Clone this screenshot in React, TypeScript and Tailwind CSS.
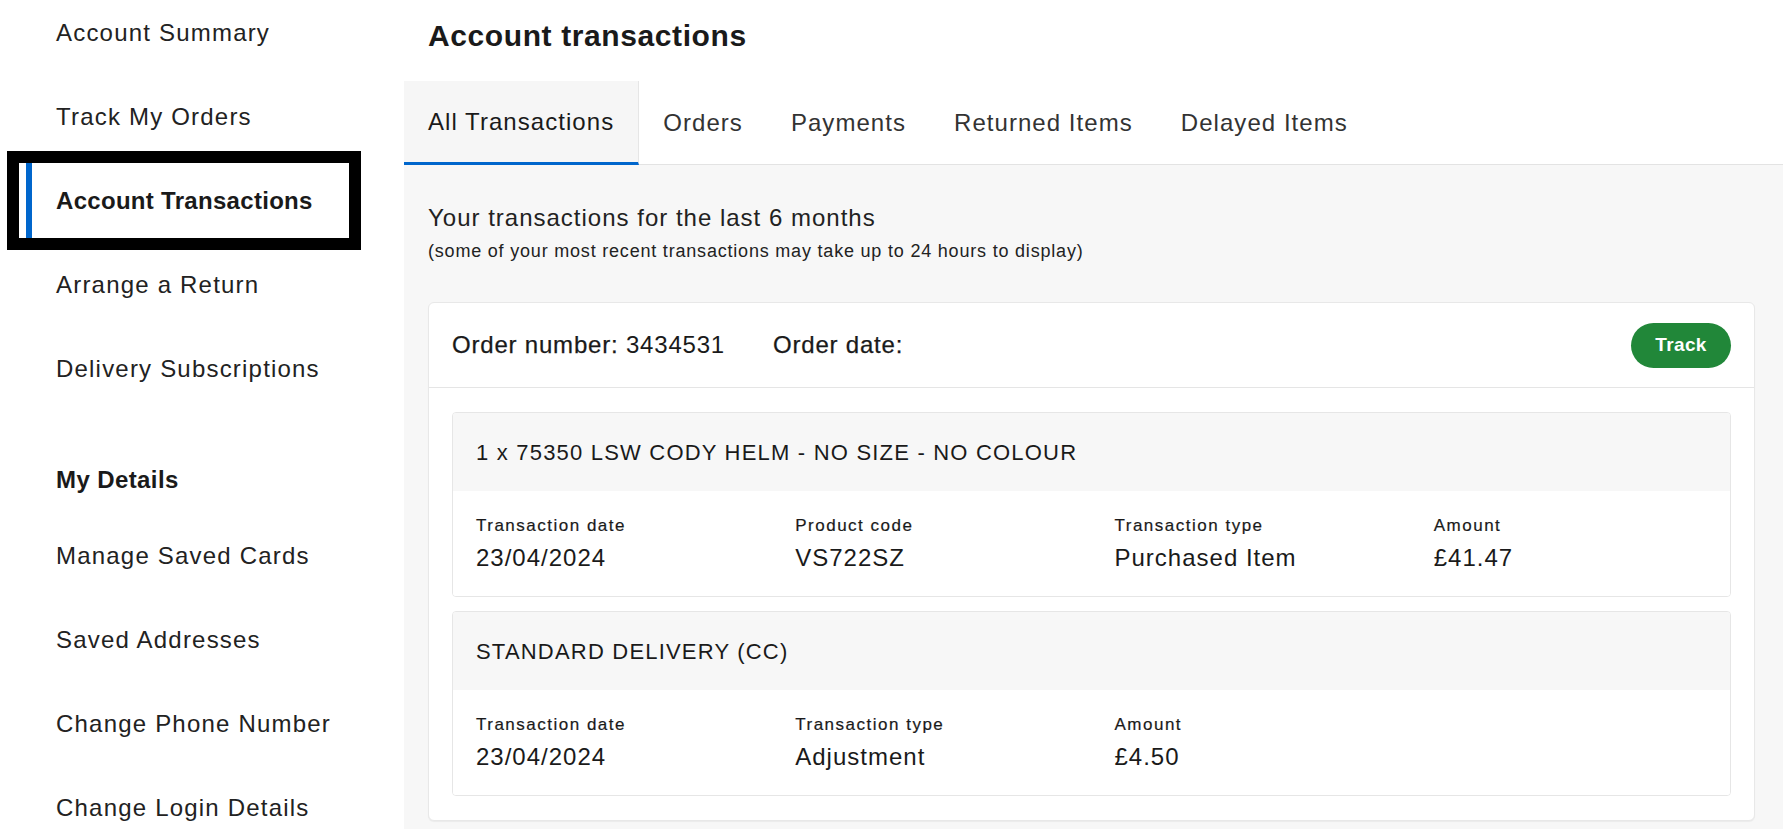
import React from "react";

const accountLinks = [
  "Account Summary",
  "Track My Orders",
  "Account Transactions",
  "Arrange a Return",
  "Delivery Subscriptions",
];

const detailLinks = [
  "Manage Saved Cards",
  "Saved Addresses",
  "Change Phone Number",
  "Change Login Details",
];

const tabs = ["All Transactions", "Orders", "Payments", "Returned Items", "Delayed Items"];

const lines = [
  {
    title: "1 x 75350 LSW CODY HELM - NO SIZE - NO COLOUR",
    fields: [
      { label: "Transaction date", value: "23/04/2024" },
      { label: "Product code", value: "VS722SZ" },
      { label: "Transaction type", value: "Purchased Item" },
      { label: "Amount", value: "£41.47" },
    ],
  },
  {
    title: "STANDARD DELIVERY (CC)",
    fields: [
      { label: "Transaction date", value: "23/04/2024" },
      { label: "Transaction type", value: "Adjustment" },
      { label: "Amount", value: "£4.50" },
    ],
  },
];

const NavItem = ({ label, active }: { label: string; active?: boolean }) => (
  <a
    href="#"
    className={
      "flex h-[75px] items-stretch " +
      (active ? "outline-[12px] outline-solid outline-black" : "")
    }
  >
    <span
      className={
        "ml-[7px] flex items-center border-l-[6px] pl-[24px] text-[24px] leading-[30px] " +
        (active
          ? "border-[#0066cc] font-bold tracking-[0.3px] text-[#1a1a1a]"
          : "border-transparent tracking-[1.2px] text-[#222]")
      }
    >
      {label}
    </span>
  </a>
);

const Sidebar = () => (
  <aside className="w-[404px] shrink-0 bg-white">
    <nav className="-mt-[5px] ml-[19px] w-[330px]">
      <div className="flex flex-col gap-[9px]">
        {accountLinks.map((l) => (
          <NavItem key={l} label={l} active={l === "Account Transactions"} />
        ))}
      </div>
      <div className="mt-[44px] flex h-[59px] items-center pl-[37px] text-[24px] font-bold tracking-[0.4px] text-[#1a1a1a]">
        My Details
      </div>
      <div className="mt-[9px] flex flex-col gap-[9px]">
        {detailLinks.map((l) => (
          <NavItem key={l} label={l} />
        ))}
      </div>
    </nav>
  </aside>
);

const App = () => {
  return (
    <div className="flex min-h-screen font-['Liberation_Sans',Arial,sans-serif] text-[#1a1a1a]">
      <Sidebar />
      <main className="flex-1 bg-[#f7f7f7]">
        <div className="bg-white">
          <div className="h-[81px] pl-6 pt-[19px]">
            <h1 className="text-[30px] font-bold leading-[34px] tracking-[0.6px]">
              Account transactions
            </h1>
          </div>
          <div className="flex h-[84px] border-b border-[#e3e3e3]">
            {tabs.map((t, i) => (
              <button
                key={t}
                className={
                  "-mb-px flex items-center px-6 text-[24px] tracking-[1.05px] " +
                  (i === 0
                    ? "border-r border-b-[3px] border-r-[#e6e6e6] border-b-[#0066cc] bg-[#f6f6f6] pt-[1px] text-[#1a1a1a]"
                    : "text-[#333]")
                }
              >
                {t}
              </button>
            ))}
          </div>
        </div>

        <div className="pb-6 pl-6 pr-[28px] pt-[38px]">
          <h2 className="text-[24px] leading-[30px] tracking-[1px] text-[#222]">
            Your transactions for the last 6 months
          </h2>
          <p className="mt-[7px] text-[18px] leading-[22px] tracking-[0.8px] text-[#222]">
            (some of your most recent transactions may take up to 24 hours to display)
          </p>

          <div className="mt-[40px] rounded-[6px] border border-[#e8e8e8] bg-white shadow-[0_1px_1px_rgba(0,0,0,0.05)]">
            <div className="flex h-[85px] items-center justify-between border-b border-[#e5e5e5] px-[23px]">
              <div className="flex items-center gap-[48px] text-[24px] tracking-[0.8px]">
                <span>
                  <span className="[-webkit-text-stroke:0.25px_currentColor]">Order number:</span> 3434531
                </span>
                <span className="[-webkit-text-stroke:0.25px_currentColor]">Order date:</span>
              </div>
              <button className="h-[45px] w-[100px] rounded-full bg-[#218739] text-[19px] font-bold tracking-[0.4px] text-white">
                Track
              </button>
            </div>

            <div className="flex flex-col gap-[14px] px-[23px] pb-6 pt-6">
              {lines.map((line) => (
                <div
                  key={line.title}
                  className="overflow-hidden rounded-[4px] border border-[#e6e6e6]"
                >
                  <div className="flex h-[78px] items-center bg-[#f7f7f7] pl-[23px] text-[22px] tracking-[1.2px] text-[#1a1a1a]">
                    {line.title}
                  </div>
                  <div className="grid h-[105px] grid-cols-4 bg-white">
                    {line.fields.map((f) => (
                      <div key={f.label} className="pl-[23px] pt-[24px]">
                        <div className="text-[17px] leading-[22px] tracking-[1.5px] [-webkit-text-stroke:0.2px_currentColor]">
                          {f.label}
                        </div>
                        <div className="mt-[6px] text-[24px] leading-[30px] tracking-[1px]">
                          {f.value}
                        </div>
                      </div>
                    ))}
                  </div>
                </div>
              ))}
            </div>
          </div>
        </div>
      </main>
    </div>
  );
};

export default App;
